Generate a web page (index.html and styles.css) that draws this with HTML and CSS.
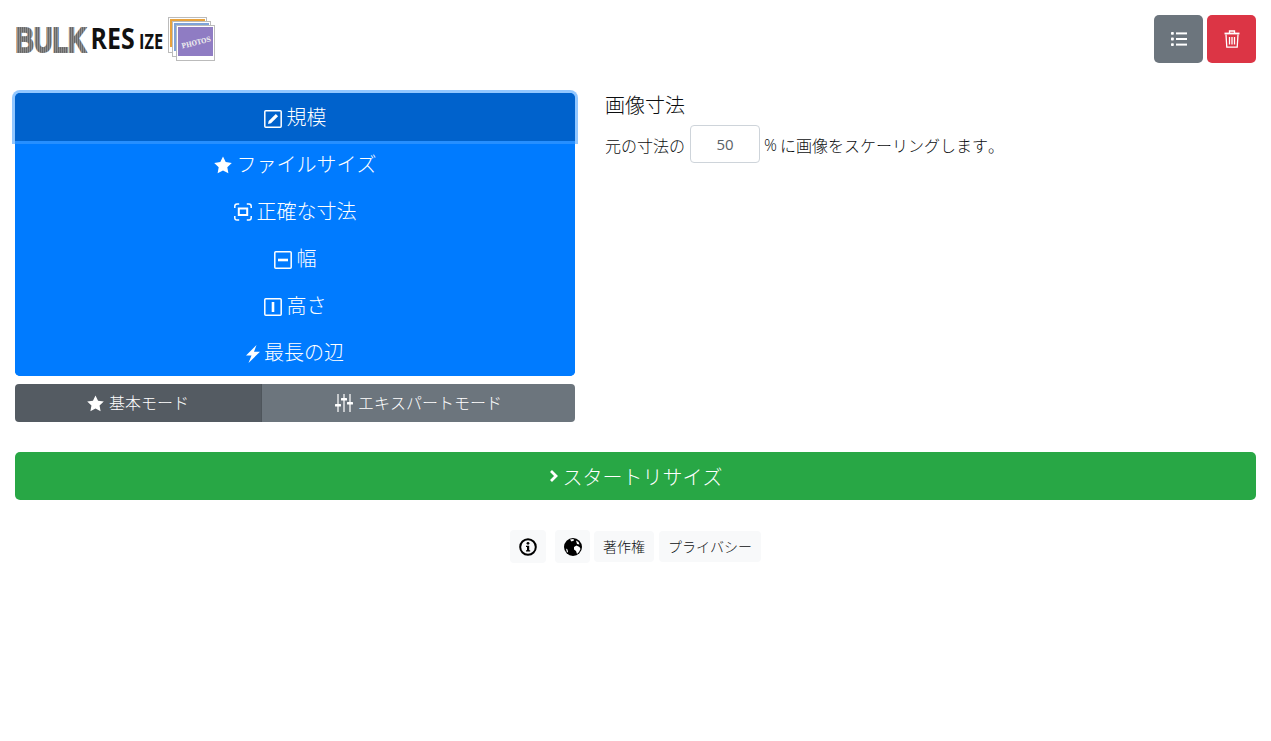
FILE: index.html
```html
<!DOCTYPE html>
<html lang="ja">
<head>
<meta charset="utf-8">
<title>Bulk Resize Photos</title>
<link rel="stylesheet" href="styles.css">
</head>
<body>
<div class="page">
  <header class="top">
    <svg class="logo" width="202" height="48" viewBox="0 0 202 48">
      <defs>
        <pattern id="stripes" width="2.817" height="2" patternUnits="userSpaceOnUse">
          <rect width="1.830" height="2" fill="#5f5f5f"/>
          <rect x="1.830" width="0.987" height="2" fill="#bdbdbd"/>
        </pattern>
      </defs>
      <text transform="translate(0.500 35.500) scale(.71 1)" class="logo-bulk">BULK</text>
      <text transform="translate(75.500 33) scale(.86 1)" class="logo-res">RES</text>
      <text transform="translate(124 33) scale(.78 1)" class="logo-ize">IZE</text>
      <rect x="153.500" y="1.500" width="38" height="35" fill="#fff" stroke="#bbb"/>
      <rect x="155" y="3" width="35" height="28" fill="#e8a33d"/>
      <rect x="157.500" y="5.500" width="38" height="35" fill="#fff" stroke="#bbb"/>
      <rect x="159" y="7" width="35" height="28" fill="#7ea3d8"/>
      <rect x="161.500" y="9.500" width="38" height="35" fill="#fff" stroke="#bbb"/>
      <rect x="163" y="11" width="35" height="29" fill="#8f7cc3"/>
      <text x="181" y="29" class="logo-photos" transform="rotate(-14 181 26)" text-anchor="middle" textLength="30" lengthAdjust="spacingAndGlyphs">PHOTOS</text>
    </svg>
    <div class="actions">
      <button class="btn square grey" aria-label="list">
        <svg width="18" height="16" viewBox="0 0 18 16" fill="#fff"><rect x="1" y="1" width="2.800" height="2.800" rx=".7"/><rect x="1" y="6.600" width="2.800" height="2.800" rx=".7"/><rect x="1" y="12.200" width="2.800" height="2.800" rx=".7"/><rect x="6" y="1.400" width="11" height="2"/><rect x="6" y="7" width="11" height="2"/><rect x="6" y="12.600" width="11" height="2"/></svg>
      </button>
      <button class="btn square red" aria-label="delete">
        <svg width="16" height="18" viewBox="0 0 16 18" fill="none" stroke="#fff" stroke-width="1.300"><path d="M.5 3.500h15" stroke-width="1.800"/><path d="M5.500 3V1h5v2"/><path d="M2 4.500l.8 12.700h10.400l.8-12.700"/><path d="M5.500 7v7.500M8 7v7.500M10.500 7v7.500"/></svg>
      </button>
    </div>
  </header>

  <main class="columns">
    <section class="left">
      <div class="modes">
        <button class="mode active"><svg class="ic" viewBox="0 0 18 18"><rect x=".8" y=".8" width="16.400" height="16.400" rx="1" fill="none" stroke="#fff" stroke-width="1.500"/><path d="M4 14l.7-3L11.800 3.900l2.300 2.300L7 13.300z" fill="#fff"/></svg>規模</button>
        <button class="mode"><svg class="ic ic-up" viewBox="0 0 18 18"><path d="M9 .5l2.700 5.600 6.100.8-4.500 4.300 1.100 6.100L9 14.400l-5.400 2.900 1.100-6.100L.2 6.900l6.100-.8z" fill="#fff"/></svg>ファイルサイズ</button>
        <button class="mode"><svg class="ic ic-up" viewBox="0 0 18 18" fill="none" stroke="#fff" stroke-width="1.500"><path d="M.8 5V3.300Q.8 1 3 1h2.200M12.800 1H15q2.200 0 2.200 2.300V5M17.200 13v1.700Q17.200 17 15 17h-2.200M5.200 17H3Q.8 17 .8 14.700V13"/><rect x="4.800" y="5.500" width="8.400" height="6.500" stroke-width="2"/></svg>正確な寸法</button>
        <button class="mode"><svg class="ic" viewBox="0 0 18 18"><rect x=".8" y=".8" width="16.400" height="16.400" rx="1" fill="none" stroke="#fff" stroke-width="1.500"/><rect x="4" y="7.700" width="10" height="2.600" fill="#fff"/></svg>幅</button>
        <button class="mode"><svg class="ic" viewBox="0 0 18 18"><rect x=".8" y=".8" width="16.400" height="16.400" rx="1" fill="none" stroke="#fff" stroke-width="1.500"/><rect x="7.700" y="4" width="2.600" height="10" fill="#fff"/></svg>高さ</button>
        <button class="mode"><svg class="ic ic-tight" viewBox="0 0 18 18"><path d="M10.500 0L0 10.500h5.500L2.500 18 14 6.700H8z" fill="#fff"/></svg>最長の辺</button>
      </div>
      <div class="toggle">
        <button class="tog on"><svg class="ic-sm ic-star" viewBox="0 0 18 18"><path d="M9 .5l2.700 5.600 6.100.8-4.500 4.300 1.100 6.100L9 14.400l-5.400 2.900 1.100-6.100L.2 6.900l6.100-.8z" fill="#fff"/></svg>基本モード</button>
        <button class="tog"><svg class="ic-sm" viewBox="0 0 18 18" fill="#fff"><rect x="2.400" y="0" width="1.200" height="18"/><rect x="0" y="10" width="6" height="2.400" rx=".5"/><rect x="8.400" y="0" width="1.200" height="18"/><rect x="6" y="4" width="6" height="2.400" rx=".5"/><rect x="14.400" y="0" width="1.200" height="18"/><rect x="12" y="8" width="6" height="2.400" rx=".5"/></svg>エキスパートモード</button>
      </div>
    </section>
    <section class="right">
      <h2 class="title">画像寸法</h2>
      <p class="line">元の寸法の<input class="num" type="text" value="50" aria-label="percent"><span class="pct">%</span>に画像をスケーリングします。</p>
    </section>
  </main>

  <button class="start"><svg class="chev" viewBox="0 0 10 14"><path d="M2 2l5 5-5 5" fill="none" stroke="#fff" stroke-width="2.800"/></svg>スタートリサイズ</button>

  <footer class="foot">
    <a class="chip icon"><svg width="18" height="18" viewBox="0 0 18 18"><circle cx="9" cy="9" r="7.800" fill="none" stroke="#000" stroke-width="2"/><circle cx="9" cy="5.300" r="1.400"/><path d="M7 7.700h3.200v4.500h1v1.400H7v-1.400h1V9H7z"/></svg></a>
    <a class="chip icon wide"><svg width="18" height="18" viewBox="0 0 18 18"><circle cx="9" cy="9" r="9"/><path d="M6 1.500L9.500 1l.5 1.500-2.500 1zM12 2.500l2.500 1.500 1 2.500-2.500-.5zM10 9l2.500-1.500 3 1.500 1 2-1.500 3-2 2-1-3-2-1.500zM2 10.500l1.500 1 .5 2.500-1 .5z" fill="#fff"/></svg></a>
    <a class="chip">著作権</a>
    <a class="chip">プライバシー</a>
  </footer>
</div>
</body>
</html>
```
FILE: styles.css
```css
* { box-sizing: border-box; }
html, body { margin: 0; padding: 0; background: #fff; }
body {
  font-family: "Open Sans", "Noto Sans CJK JP", sans-serif;
  font-weight: 300;
  font-kerning: none;
  color: #0c0e10;
  font-size: 16px;
}
button { font-family: inherit; font-weight: 300; font-kerning: none; border: 0; cursor: pointer; color: #fff; }
.page { padding: 15px; }

.top { display: flex; justify-content: space-between; align-items: flex-start; height: 48px; }
.logo { display: block; margin-top: 1px; }
.logo-bulk { font: 900 36px "Liberation Sans", sans-serif; fill: url(#stripes); stroke: url(#stripes); stroke-width: 2px; }
.logo-res { font: 700 29px "Open Sans", sans-serif; fill: #111; }
.logo-ize { font: 700 21px "Open Sans", sans-serif; fill: #111; }
.logo-photos { font: 700 7px "DejaVu Serif", serif; fill: #eee; }
.actions { display: flex; gap: 4px; }
.btn { display: flex; align-items: center; justify-content: center; border-radius: 5px; padding: 0; }
.square { width: 49px; height: 48px; }
.grey { background: #6c757d; }
.red { background: #dc3545; }

.columns { display: flex; gap: 30px; margin-top: 30px; }
.left { width: 560px; flex: none; }
.right { flex: 1; }

.modes { display: flex; flex-direction: column; background: #007bff; border-radius: 5px; }
.mode {
  height: 47px;
  background: #007bff;
  font-size: 20px;
  line-height: 30px;
  display: flex;
  align-items: center;
  justify-content: center;
  padding: 0;
}
.mode:first-child { height: 48px; padding-top: 1px; }
.mode:last-child { border-radius: 0 0 5px 5px; }
.mode.active {
  background: #0062cc;
  border-radius: 5px 5px 0 0;
  box-shadow: 0 0 0 3px rgba(38, 143, 255, .5);
  position: relative;
}
.mode.active::after {
  content: "";
  position: absolute;
  left: 0;
  right: 0;
  top: 100%;
  height: 3px;
  background: #268fff;
}
.ic { width: 18px; height: 18px; margin-right: 5px; flex: none; position: relative; top: 1px; }
.ic-up { top: 0; }
.ic-tight { margin-right: 0; }

.toggle { display: flex; margin-top: 8px; height: 38px; border-radius: 4px; overflow: hidden; }
.tog {
  background: #6c757d;
  font-size: 16px;
  display: flex;
  align-items: center;
  justify-content: center;
  padding: 0 0 2px;
  width: 313px;
}
.tog.on { width: 247px; background: #545b62; border-right: 1px solid #4e555b; }
.ic-sm { width: 18px; height: 18px; margin-right: 5px; flex: none; position: relative; top: 1px; }
.ic-star { width: 17px; height: 17px; }

.title { font-size: 20px; font-weight: 300; line-height: 24px; margin: 1px 0 0; }
.line { margin: 7px 0 0; height: 38px; display: flex; align-items: center; white-space: nowrap; padding-top: 2px; }
.pct { margin-right: 3px; }
.num {
  width: 70px;
  height: 38px;
  margin: -2px 4px 0 5px;
  border: 1px solid #ced4da;
  border-radius: 4px;
  font: 400 15px "Open Sans", sans-serif;
  color: #5a6268;
  text-align: center;
  padding: 0;
}

.start {
  display: flex;
  align-items: center;
  justify-content: center;
  width: 100%;
  height: 48px;
  margin-top: 30px;
  background: #28a745;
  border-radius: 5px;
  font-size: 20px;
  padding: 0;
}
.chev { width: 10px; height: 14px; margin-right: 4px; }

.foot { display: flex; justify-content: center; align-items: flex-start; gap: 5px; margin-top: 30px; }
.chip {
  background: #f8f9fa;
  border-radius: 4px;
  font-size: 14px;
  line-height: 21px;
  padding: 5px 9px;
  height: 31px;
  color: #0c0e10;
  margin-top: 1px;
}
.chip.icon {
  display: flex;
  align-items: center;
  justify-content: center;
  width: 36px;
  height: 33px;
  padding: 0;
  margin-top: 0;
  margin-right: 4px;
}
.chip.icon.wide { width: 35px; margin-right: -1px; }
```
